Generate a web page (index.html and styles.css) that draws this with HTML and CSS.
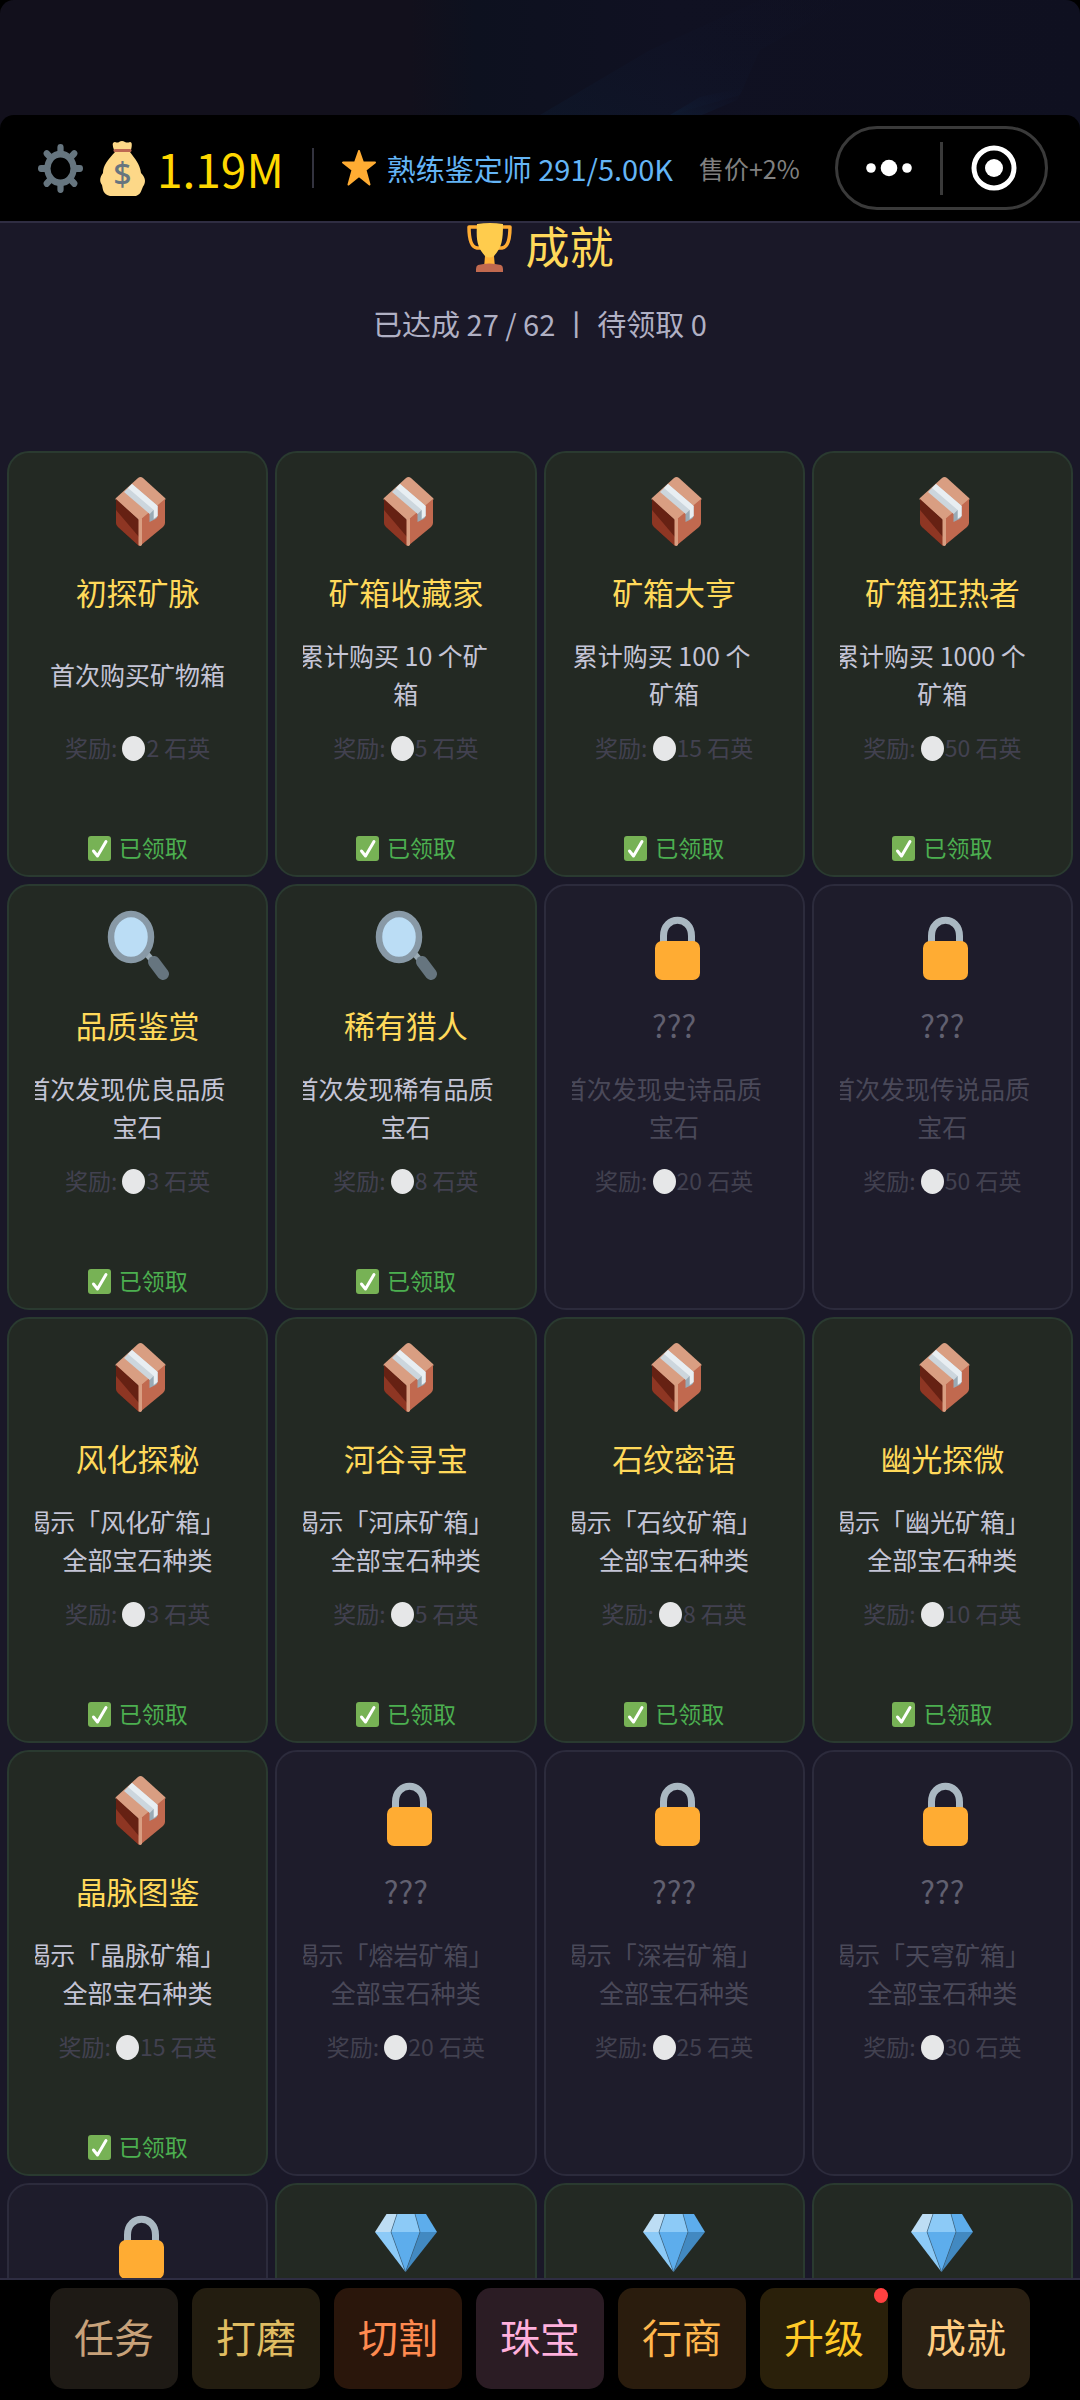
FILE: index.html
```html
<!DOCTYPE html>
<html lang="zh-CN">
<head>
<meta charset="utf-8">
<meta name="viewport" content="width=device-width, initial-scale=1">
<title>成就</title>
<link rel="stylesheet" href="styles.css">
</head>
<body>
<svg class="sprite" aria-hidden="true">
  <symbol id="box" viewBox="0 0 62 70" preserveAspectRatio="none">
    <path fill="#d99e82" d="M36 1 58 21q1 1 0 2L33 44 9 23q-1-1 0-2L31 1q2.500-2 5 0z"/>
    <path fill="#662113" d="M9 22 32 43v26L11 50q-2-2-2-4z"/>
    <path fill="#a8452f" d="m9 33 23 27v9L11 50q-2-2-2-4z" opacity=".6"/>
    <path fill="#c1694f" d="M58 22 33 43v26l23-19q2-2 2-4z"/>
    <path fill="#d99e82" d="M31.500 42 35 41v27q-2 2-3.500 0z"/>
    <path fill="#99aab5" d="m42.500 36 8-7v10q0 2-2 3l-6 3z"/>
    <path fill="#ccd6dd" d="m17 15 8-8 25.700 22-8 8z"/>
    <path fill="#e8eef2" d="m21 11 4-4 25.700 22v10l-4 3v-9z"/>
  </symbol>
  <symbol id="lens" viewBox="0 0 62 70" preserveAspectRatio="none">
    <path stroke="#9aaab4" stroke-width="6" d="m38 42 7 8"/>
    <path stroke="#66757f" stroke-width="12" stroke-linecap="round" d="m47 52 9 12"/>
    <ellipse cx="24" cy="27" rx="20" ry="23" fill="#bbddf5" stroke="#8899a6" stroke-width="6.500"/>
  </symbol>
  <symbol id="lock" viewBox="0 0 62 70" preserveAspectRatio="none">
    <path fill="none" stroke="#aab8c2" stroke-width="7" d="M20.500 34V26c0-21 28-21 28 0v8"/>
    <rect x="12" y="31" width="45" height="39" rx="7" fill="#ffac33"/>
  </symbol>
  <symbol id="gem" viewBox="0 0 62 70" preserveAspectRatio="none">
    <path fill="#bdddf4" d="M11.500 5H22l-6 18H0z"/>
    <path fill="#8ccaf7" d="M22 5h18l5 18H16z"/>
    <path fill="#5dadec" d="M40 5h11l11 18H45z"/>
    <path fill="#8ccaf7" d="M0 23h16l14.500 40z"/>
    <path fill="#5dadec" d="M16 23h29L30.500 63z"/>
    <path fill="#4289c1" d="M45 23h17L30.500 63z"/>
    <path fill="none" stroke="#3c5f7a" stroke-width=".6" d="m22 5-6 18 14.500 40L45 23 40 5"/>
  </symbol>
  <symbol id="dot" viewBox="0 0 23 25" preserveAspectRatio="none">
    <ellipse cx="11.500" cy="12.500" rx="11.500" ry="12.500" fill="#e6e7e8"/>
  </symbol>
  <symbol id="check" viewBox="0 0 23 25" preserveAspectRatio="none">
    <rect width="23" height="25" rx="3" fill="#77b255"/>
    <path fill="none" stroke="#fff" stroke-width="3" stroke-linecap="round" stroke-linejoin="round" d="m5.500 15 4 5L18 5.500"/>
  </symbol>
</svg>

<div class="app">
  <div class="banner">
    <svg viewBox="0 0 1080 130" preserveAspectRatio="none" aria-hidden="true">
      <defs>
        <linearGradient id="sky"><stop offset=".38" stop-color="#12101c"/><stop offset=".44" stop-color="#0d111f"/><stop offset=".62" stop-color="#101122"/><stop offset="1" stop-color="#0f1020"/></linearGradient>
        <linearGradient id="ray" x1="0" y1="1" x2="1" y2="0"><stop offset="0" stop-color="#0f2038"/><stop offset="1" stop-color="#111530" stop-opacity="0"/></linearGradient>
      </defs>
      <rect width="1080" height="130" fill="url(#sky)"/>
      <path fill="url(#ray)" opacity=".3" d="M540 115 650 50 760 0h90l-90 50-20 45-70 20z"/>
      <path fill="url(#ray)" opacity=".6" d="m670 115 30-18 45-10-8 13-35 15z"/>
    </svg>
  </div>
  <header class="topbar">
    <button class="gear" aria-label="设置">
      <svg viewBox="-18 -18 36 36" preserveAspectRatio="none"><g fill="none" stroke="#66757f"><circle r="10.500" stroke-width="5"/><path stroke-width="5" stroke-linecap="round" d="M0-12v-3.500M0 12v3.500M-12 0h-3.500M12 0h3.500M-8.500-8.500-11-11M8.500-8.500 11-11M-8.500 8.500-11 11M8.500 8.500 11 11"/></g></svg>
    </button>
    <div class="money">
      <svg viewBox="0 0 45 55" preserveAspectRatio="none" aria-hidden="true">
        <path fill="#fdd888" d="M14 9q-3-8 1-8 3 1 4 0 3-2 6 0 2 1 5 0 3 0 1 8l-1 2c5 7 10 12 11 21 4 4 5 8 3 12-3 4-2 9-8 11H10c-7-2-7-6-8-11-3-4-2-8 1-12 0-8 5-13 12-21z"/>
        <path stroke="#bf6952" stroke-width="3" stroke-linecap="round" d="M15 9.500h15"/>
        <text x="22.500" y="45" text-anchor="middle" class="coin">$</text>
      </svg>
      <span>1.19M</span>
    </div>
    <div class="rank">
      <svg viewBox="0 0 34 36" preserveAspectRatio="none" aria-hidden="true"><path fill="#ffac33" stroke="#ffac33" stroke-width="2" stroke-linejoin="round" d="m17 1 4 11.500h12l-9.500 7.500 4 14.500L17 26 6.500 34.500l4-14.500L1 12.500h12z"/></svg>
      <span>熟练鉴定师 291/5.00K</span>
    </div>
    <span class="bonus">售价+2%</span>
    <div class="capsule">
      <button aria-label="更多"><svg class="more" viewBox="0 0 46 18"><g fill="#fff"><circle cx="5" cy="9" r="4.800"/><circle cx="23" cy="9" r="8.300"/><circle cx="41" cy="9" r="4.800"/></g></svg></button>
      <button aria-label="关闭"><svg class="close" viewBox="0 0 46 46"><circle cx="23" cy="23" r="20" fill="none" stroke="#fff" stroke-width="5"/><circle cx="23" cy="23" r="9" fill="#fff"/></svg></button>
    </div>
  </header>

  <main class="page">
    <h1>
      <svg viewBox="0 0 45 50" preserveAspectRatio="none" aria-hidden="true"><path fill="none" stroke="#ffac33" stroke-width="3.500" stroke-linejoin="round" d="M13 4H2q0 20 8 21h6M32 4h11q0 20-8 21h-6"/><path fill="#ffcc4d" d="M10 1q13-2 26 0c0 16-1 23-9 32v9h-9v-9C10 24 9 17 10 1z"/><path fill="#ffac33" d="M18 33q4 3 9 0l1 9H17z" opacity=".8"/><path fill="#c1694f" d="M11 42q11-3 23 0 2 1 2 4v3H9v-3q0-3 2-4z"/></svg>
      <span>成就</span>
    </h1>
    <p class="summary">已达成 27 / 62 丨 待领取 0</p>

    <section class="grid">
      <article class="card done"><svg class="icon"><use href="#box"/></svg><h2>初探矿脉</h2><p class="desc"><span>首次购买矿物箱</span></p><p class="reward">奖励: <svg><use href="#dot"/></svg>2 石英</p><p class="claimed"><svg><use href="#check"/></svg> 已领取</p></article>
      <article class="card done"><svg class="icon"><use href="#box"/></svg><h2>矿箱收藏家</h2><p class="desc"><span class="lead">累计购买 10 个矿</span><span>箱</span></p><p class="reward">奖励: <svg><use href="#dot"/></svg>5 石英</p><p class="claimed"><svg><use href="#check"/></svg> 已领取</p></article>
      <article class="card done"><svg class="icon"><use href="#box"/></svg><h2>矿箱大亨</h2><p class="desc"><span class="lead">累计购买 100 个</span><span>矿箱</span></p><p class="reward">奖励: <svg><use href="#dot"/></svg>15 石英</p><p class="claimed"><svg><use href="#check"/></svg> 已领取</p></article>
      <article class="card done"><svg class="icon"><use href="#box"/></svg><h2>矿箱狂热者</h2><p class="desc"><span class="lead">累计购买 1000 个</span><span>矿箱</span></p><p class="reward">奖励: <svg><use href="#dot"/></svg>50 石英</p><p class="claimed"><svg><use href="#check"/></svg> 已领取</p></article>

      <article class="card done"><svg class="icon"><use href="#lens"/></svg><h2>品质鉴赏</h2><p class="desc"><span class="lead">首次发现优良品质</span><span>宝石</span></p><p class="reward">奖励: <svg><use href="#dot"/></svg>3 石英</p><p class="claimed"><svg><use href="#check"/></svg> 已领取</p></article>
      <article class="card done"><svg class="icon"><use href="#lens"/></svg><h2>稀有猎人</h2><p class="desc"><span class="lead">首次发现稀有品质</span><span>宝石</span></p><p class="reward">奖励: <svg><use href="#dot"/></svg>8 石英</p><p class="claimed"><svg><use href="#check"/></svg> 已领取</p></article>
      <article class="card"><svg class="icon"><use href="#lock"/></svg><h2>???</h2><p class="desc"><span class="lead">首次发现史诗品质</span><span>宝石</span></p><p class="reward">奖励: <svg><use href="#dot"/></svg>20 石英</p></article>
      <article class="card"><svg class="icon"><use href="#lock"/></svg><h2>???</h2><p class="desc"><span class="lead">首次发现传说品质</span><span>宝石</span></p><p class="reward">奖励: <svg><use href="#dot"/></svg>50 石英</p></article>

      <article class="card done"><svg class="icon"><use href="#box"/></svg><h2>风化探秘</h2><p class="desc"><span class="lead">揭示「风化矿箱」</span><span>全部宝石种类</span></p><p class="reward">奖励: <svg><use href="#dot"/></svg>3 石英</p><p class="claimed"><svg><use href="#check"/></svg> 已领取</p></article>
      <article class="card done"><svg class="icon"><use href="#box"/></svg><h2>河谷寻宝</h2><p class="desc"><span class="lead">揭示「河床矿箱」</span><span>全部宝石种类</span></p><p class="reward">奖励: <svg><use href="#dot"/></svg>5 石英</p><p class="claimed"><svg><use href="#check"/></svg> 已领取</p></article>
      <article class="card done"><svg class="icon"><use href="#box"/></svg><h2>石纹密语</h2><p class="desc"><span class="lead">揭示「石纹矿箱」</span><span>全部宝石种类</span></p><p class="reward">奖励: <svg><use href="#dot"/></svg>8 石英</p><p class="claimed"><svg><use href="#check"/></svg> 已领取</p></article>
      <article class="card done"><svg class="icon"><use href="#box"/></svg><h2>幽光探微</h2><p class="desc"><span class="lead">揭示「幽光矿箱」</span><span>全部宝石种类</span></p><p class="reward">奖励: <svg><use href="#dot"/></svg>10 石英</p><p class="claimed"><svg><use href="#check"/></svg> 已领取</p></article>

      <article class="card done"><svg class="icon"><use href="#box"/></svg><h2>晶脉图鉴</h2><p class="desc"><span class="lead">揭示「晶脉矿箱」</span><span>全部宝石种类</span></p><p class="reward">奖励: <svg><use href="#dot"/></svg>15 石英</p><p class="claimed"><svg><use href="#check"/></svg> 已领取</p></article>
      <article class="card"><svg class="icon"><use href="#lock"/></svg><h2>???</h2><p class="desc"><span class="lead">揭示「熔岩矿箱」</span><span>全部宝石种类</span></p><p class="reward">奖励: <svg><use href="#dot"/></svg>20 石英</p></article>
      <article class="card"><svg class="icon"><use href="#lock"/></svg><h2>???</h2><p class="desc"><span class="lead">揭示「深岩矿箱」</span><span>全部宝石种类</span></p><p class="reward">奖励: <svg><use href="#dot"/></svg>25 石英</p></article>
      <article class="card"><svg class="icon"><use href="#lock"/></svg><h2>???</h2><p class="desc"><span class="lead">揭示「天穹矿箱」</span><span>全部宝石种类</span></p><p class="reward">奖励: <svg><use href="#dot"/></svg>30 石英</p></article>

      <article class="card"><svg class="icon"><use href="#lock"/></svg></article>
      <article class="card done"><svg class="icon"><use href="#gem"/></svg></article>
      <article class="card done"><svg class="icon"><use href="#gem"/></svg></article>
      <article class="card done"><svg class="icon"><use href="#gem"/></svg></article>
    </section>
  </main>

  <nav class="tabs">
    <div class="tablist">
      <button class="quest">任务</button>
      <button class="polish">打磨</button>
      <button class="cut">切割</button>
      <button class="jewel">珠宝</button>
      <button class="trade">行商</button>
      <button class="upgrade">升级<i class="badge"></i></button>
      <button class="achieve">成就</button>
    </div>
  </nav>
</div>
</body>
</html>
```
FILE: styles.css
```css
* { box-sizing: border-box; }

body {
  margin: 0;
  background: #000;
  color: #c5c5d6;
  font-family: "Noto Sans CJK SC", "Noto Sans", sans-serif;
  font-weight: 400;
}

h1, h2, p { margin: 0; font-weight: inherit; }

svg { display: block; flex: none; }

button {
  padding: 0;
  border: 0;
  background: none;
  color: inherit;
  font: inherit;
}

.sprite { position: absolute; width: 0; height: 0; }

.app {
  display: flex;
  flex-direction: column;
  height: 100vh;
  overflow: hidden;
}

/* scenery strip behind the status bar */
.banner {
  height: 130px;
  margin-bottom: -15px;
  border-radius: 14px 14px 0 0;
  overflow: hidden;
  flex: none;
}
.banner svg { width: 100%; height: 100%; }

.topbar {
  position: relative;
  display: flex;
  align-items: center;
  flex: none;
  height: 106px;
  padding: 0 32px 0 38px;
  border-radius: 14px 14px 0 0;
  background: #000;
  white-space: nowrap;
}
.gear svg { width: 45px; height: 49px; }
.money {
  display: flex;
  align-items: center;
  gap: 12px;
  margin-left: 17px;
  padding-right: 28px;
  color: #ffd700;
  font-size: 46px;
  line-height: 40px;
  border-right: 2px solid #33333f;
}
.money svg { width: 45px; height: 55px; margin: -8px 0; }
.coin { fill: #67757f; font: 500 32px "Noto Sans", sans-serif; }
.rank {
  display: flex;
  align-items: center;
  gap: 11px;
  margin-left: 28px;
  color: #64b5f6;
  font-size: 29px;
}
.rank svg { width: 34px; height: 36px; }
.bonus { margin-left: 26px; color: #808080; font-size: 25px; }
.capsule {
  display: flex;
  align-items: center;
  width: 213px;
  height: 84px;
  margin-left: auto;
  border: 3px solid #3a3a3a;
  border-radius: 42px;
}
.capsule button {
  display: flex;
  flex: 1;
  align-items: center;
  justify-content: center;
  height: 53px;
}
.capsule button + button { border-left: 3px solid #3a3a3a; }
.more { width: 46px; height: 18px; }
.close { width: 46px; height: 46px; }

.page {
  flex: 1;
  min-height: 0;
  overflow: hidden;
  border-top: 2px solid #2f2d42;
  background: #1a1828;
}
h1 {
  display: flex;
  justify-content: center;
  gap: 14px;
  color: #ffd95a;
  font-size: 44px;
  line-height: 44px;
}
h1 svg { width: 45px; height: 50px; }
.summary {
  margin-top: 32px;
  color: #b0b0c4;
  font-size: 29px;
  line-height: 36px;
  text-align: center;
}

.grid {
  display: grid;
  grid-template-columns: repeat(4, 1fr);
  gap: 7px;
  margin-top: 110px;
  padding: 0 7px;
}
.card {
  display: flex;
  flex-direction: column;
  align-items: center;
  min-width: 0;
  min-height: 426px;
  padding: 24px 26px 12px;
  border: 2px solid #2c2b3c;
  border-radius: 22px;
  background: #1e1c2b;
  white-space: nowrap;
}
.card.done { border-color: #2a3a30; background: #232923; }
.icon { width: 62px; height: 70px; }
h2 {
  margin-top: 27px;
  color: #616070;
  font-size: 31px;
  line-height: 36px;
}
.done h2 { color: #ffd95a; }
.desc {
  display: flex;
  flex-direction: column;
  align-items: center;
  justify-content: center;
  align-self: stretch;
  height: 76px;
  margin-top: 26px;
  overflow: hidden;
  color: #4a4959;
  font-size: 25px;
  line-height: 38px;
}
.done .desc { color: #c5c5d6; }
/* the broken line keeps one blank character at its end */
.lead { padding-right: 1em; }
.reward {
  margin-top: 19px;
  color: #424150;
  font-size: 23px;
  line-height: 32px;
}
.reward svg, .claimed svg {
  display: inline-block;
  width: 23px;
  height: 25px;
  vertical-align: -4px;
}
.reward svg { margin-right: 1px; }
.claimed {
  margin-top: auto;
  color: #4caf50;
  font-size: 23px;
  line-height: 32px;
  white-space: pre;
}
.claimed svg { margin-right: 3px; }

.tabs {
  flex: none;
  padding: 8px 50px 11px;
  border-top: 2px solid #2f2d42;
}
.tablist {
  display: grid;
  grid-template-columns: repeat(7, 1fr);
  gap: 14px;
}
.tablist button {
  position: relative;
  height: 101px;
  padding-bottom: 5px;
  border-radius: 15px;
  font-size: 40px;
}
.quest { background: #1e1a15; color: #c8a27a; }
.polish { background: #231d10; color: #e0bd62; }
.cut { background: #2a160b; color: #ff8a50; }
.jewel { background: #2b1c24; color: #ffb0dc; }
.trade { background: #2a1c0d; color: #ffb74d; }
.upgrade { background: #2a200a; color: #ffca28; }
.achieve { background: #2a2013; color: #ffcc80; }
.badge {
  position: absolute;
  top: 0;
  right: 0;
  width: 14px;
  height: 15px;
  border-radius: 50%;
  background: #ff4040;
}
```
